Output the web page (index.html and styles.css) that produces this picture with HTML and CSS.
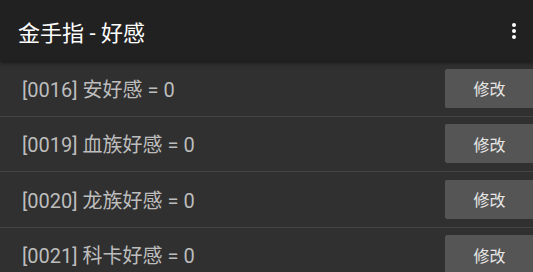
FILE: index.html
```html
<!DOCTYPE html>
<html>
<head>
    <title>金手指 - 好感</title>
    <meta charset="UTF-8">
    <link rel="stylesheet" href="styles.css">
</head>
<body>
    <div class="appbar">
        <h1 class="title">金手指 - 好感</h1>
        <button class="menu-btn" aria-label="更多">
            <svg width="6" height="18" viewBox="0 0 6 18">
                <circle cx="3" cy="3" r="2" fill="#fff"/>
                <circle cx="3" cy="9" r="2" fill="#fff"/>
                <circle cx="3" cy="15" r="2" fill="#fff"/>
            </svg>
        </button>
    </div>

    <div class="list">
        <div class="row">
            <span class="label">[0016] 安好感 = 0</span>
            <button class="edit-btn">修改</button>
        </div>
        <div class="row">
            <span class="label">[0019] 血族好感 = 0</span>
            <button class="edit-btn">修改</button>
        </div>
        <div class="row">
            <span class="label">[0020] 龙族好感 = 0</span>
            <button class="edit-btn">修改</button>
        </div>
        <div class="row">
            <span class="label">[0021] 科卡好感 = 0</span>
            <button class="edit-btn">修改</button>
        </div>
    </div>
</body>
</html>
```

FILE: styles.css
```css
body {
    margin: 0;
    background: #303030;
    font-family: Roboto, "Noto Sans CJK SC", sans-serif;
    overflow: hidden;
}

.appbar {
    position: relative;
    z-index: 1;
    height: 61px;
    display: flex;
    align-items: center;
    justify-content: space-between;
    padding: 0 8px 0 18px;
    background: #212121;
    box-shadow: 0 2px 4px rgba(0, 0, 0, 0.5);
}

.title {
    margin: 0;
    font-size: 22px;
    font-weight: 400;
    color: #fff;
}

.menu-btn {
    background: none;
    border: none;
    padding: 4px 8px;
    display: flex;
}

.list {
    display: flex;
    flex-direction: column;
}

.row {
    height: 54.5px;
    display: flex;
    align-items: center;
    justify-content: space-between;
    padding-left: 22px;
    border-bottom: 1px solid #454545;
}

.label {
    font-size: 20px;
    color: #bdbdbd;
}

.edit-btn {
    width: 89px;
    height: 39px;
    margin-right: -1px;
    background: #555;
    color: #e6e6e6;
    border: none;
    border-radius: 2px;
    font-family: inherit;
    font-size: 16px;
    padding: 0;
}
```
